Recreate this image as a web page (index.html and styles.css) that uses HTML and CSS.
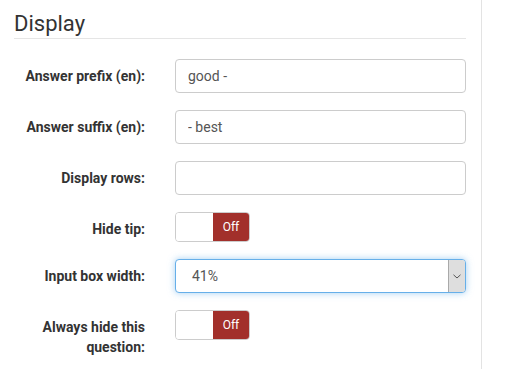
FILE: index.html
```html
<!DOCTYPE html>
<html lang="en">
<head>
  <meta charset="UTF-8" />
  <meta name="viewport" content="width=device-width, initial-scale=1" />
  <title>Question settings</title>
  <link rel="stylesheet" href="styles.css">
</head>
<body>
<div class="panel">
  <h3 class="section-title">Display</h3>

  <div class="form-row">
    <label for="prefix">Answer prefix (en):</label>
    <input id="prefix" class="control" type="text" value="good -" />
  </div>

  <div class="form-row">
    <label for="suffix">Answer suffix (en):</label>
    <input id="suffix" class="control" type="text" value="- best" />
  </div>

  <div class="form-row">
    <label for="rows">Display rows:</label>
    <input id="rows" class="control" type="text" value="" />
  </div>

  <div class="form-row">
    <label>Hide tip:</label>
    <div class="toggle">
      <span class="toggle-on"></span>
      <span class="toggle-off">Off</span>
    </div>
  </div>

  <div class="form-row">
    <label>Input box width:</label>
    <div class="control select focused">
      <span class="select-value">41%</span>
      <span class="select-arrow">
        <svg width="8" height="5" viewBox="0 0 8 5"><path d="M0.5 0.8 L4 4 L7.5 0.8" fill="none" stroke="#555" stroke-width="1"/></svg>
      </span>
    </div>
  </div>

  <div class="form-row">
    <label>Always hide this question:</label>
    <div class="toggle">
      <span class="toggle-on"></span>
      <span class="toggle-off">Off</span>
    </div>
  </div>
</div>
</body>
</html>
```

FILE: styles.css
```css
body {
  margin: 0;
  font-family: Roboto, "Liberation Sans", Arial, sans-serif;
  color: #333;
  background: #fff;
}

.panel {
  width: 481px;
  min-height: 100vh;
  border-right: 1px solid #e3e3e3;
}

.section-title {
  margin: 0 15px 20px 14px;
  padding: 11px 0 1px 0;
  font-size: 22px;
  line-height: 26px;
  font-weight: 400;
  color: #333;
  border-bottom: 1px solid #e5e5e5;
}

.form-row {
  display: grid;
  grid-template-columns: 131px 291px;
  column-gap: 30px;
  margin-left: 14px;
  margin-bottom: 17px;
}

.form-row label {
  text-align: right;
  font-size: 14px;
  font-weight: 700;
  line-height: 20px;
  padding-top: 7px;
}

.control {
  box-sizing: border-box;
  width: 291px;
  height: 34px;
  padding: 6px 12px;
  font-family: inherit;
  font-size: 14px;
  color: #555;
  border: 1px solid #ccc;
  border-radius: 4px;
  background: #fff;
  outline: none;
}

.select {
  display: flex;
  align-items: center;
  padding: 0 0 0 16px;
}
.select.focused {
  border-color: #66afe9;
  box-shadow: 0 0 7px rgba(102, 175, 233, 0.6);
}
.select-value {
  flex: 1;
}
.select-arrow {
  width: 16px;
  height: 32px;
  display: flex;
  align-items: center;
  justify-content: center;
  background: #dedede;
  border-left: 1px solid #a9a9a9;
  border-radius: 0 3px 3px 0;
}

.toggle {
  display: flex;
  width: 75px;
  height: 30px;
  box-sizing: border-box;
  border: 1px solid #ccc;
  border-radius: 4px;
  overflow: hidden;
}
.toggle-on {
  width: 37px;
  background: #fff;
}
.toggle-off {
  flex: 1;
  background: #a2302b;
  color: #fff;
  font-size: 12px;
  display: flex;
  align-items: center;
  justify-content: center;
}
```
